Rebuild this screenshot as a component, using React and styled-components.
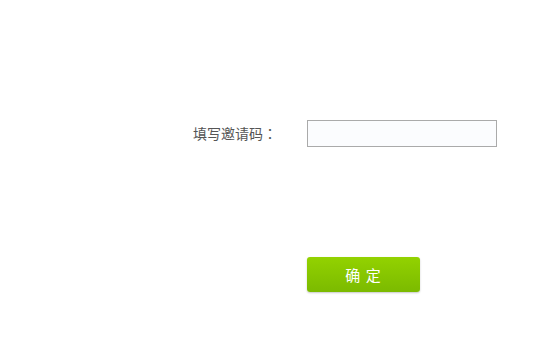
import React from "react";
import styled, { createGlobalStyle } from "styled-components";

const Global = createGlobalStyle`
  html, body { margin: 0; padding: 0; background: #fff; }
  body { font-family: "Liberation Sans", "Noto Sans CJK SC", sans-serif; }
`;

const Page = styled.div`
  width: 551px;
  height: 353px;
  padding-top: 120px;
  box-sizing: border-box;
`;

const Row = styled.div`
  display: grid;
  grid-template-columns: 277px 190px;
  column-gap: 30px;
  align-items: center;
`;

const Label = styled.label`
  text-align: right;
  font-size: 14px;
  line-height: 27px;
  color: #555;
  font-family: "Noto Sans CJK SC", sans-serif;
`;

const Colon = styled.span`
  font-family: "Noto Sans CJK JP", sans-serif;
`;

const Input = styled.input`
  box-sizing: border-box;
  width: 190px;
  height: 27px;
  border: 1px solid #aaa;
  background: #fbfcfe;
  outline: none;
  padding: 0 6px;
  font-size: 13px;
`;

const Actions = styled.div`
  margin-top: 110px;
  padding-left: 307px;
`;

const Button = styled.button`
  width: 113px;
  height: 35px;
  border: none;
  border-radius: 3px;
  background: linear-gradient(to bottom, #93d200, #7bba00);
  box-shadow: 0 1px 2px rgba(0, 0, 0, 0.22);
  color: #fff;
  font-size: 15px;
  font-family: "Noto Sans CJK SC", sans-serif;
  letter-spacing: 1px;
  padding: 0;
  cursor: pointer;
`;

export default function App() {
  return (
    <>
      <Global />
      <Page>
        <Row>
          <Label>
            填写邀请码<Colon>：</Colon>
          </Label>
          <Input type="text" />
        </Row>
        <Actions>
          <Button>确 定</Button>
        </Actions>
      </Page>
    </>
  );
}
